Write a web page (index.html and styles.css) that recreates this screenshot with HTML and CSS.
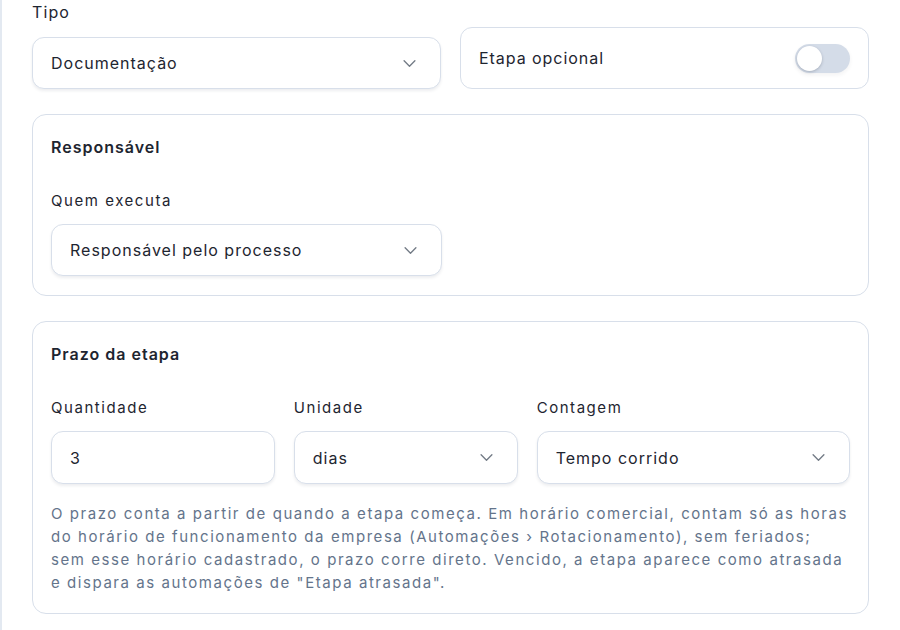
FILE: index.html
```html
<!DOCTYPE html>
<html lang="pt-BR">
<head>
<meta charset="utf-8">
<title>Etapa</title>
<link rel="stylesheet" href="styles.css">
</head>
<body>
<div class="page">
  <div class="top-row">
    <div class="field">
      <div class="label-plain">Tipo</div>
      <div class="select">
        <span>Documentação</span>
        <svg class="chev" viewBox="0 0 16 10" width="16" height="10"><path d="M2 2l6 6 6-6" fill="none" stroke="#737b86" stroke-width="1.5" stroke-linecap="round" stroke-linejoin="round"/></svg>
      </div>
    </div>
    <div class="toggle-card">
      <span>Etapa opcional</span>
      <div class="toggle"><div class="knob"></div></div>
    </div>
  </div>

  <section class="card card-resp">
    <h3 class="card-title">Responsável</h3>
    <div class="label">Quem executa</div>
    <div class="select half">
      <span>Responsável pelo processo</span>
      <svg class="chev" viewBox="0 0 16 10" width="16" height="10"><path d="M2 2l6 6 6-6" fill="none" stroke="#737b86" stroke-width="1.5" stroke-linecap="round" stroke-linejoin="round"/></svg>
    </div>
  </section>

  <section class="card card-prazo">
    <h3 class="card-title">Prazo da etapa</h3>
    <div class="grid3">
      <div class="col">
        <div class="label">Quantidade</div>
        <div class="select"><span>3</span></div>
      </div>
      <div class="col">
        <div class="label">Unidade</div>
        <div class="select">
          <span>dias</span>
          <svg class="chev" viewBox="0 0 16 10" width="16" height="10"><path d="M2 2l6 6 6-6" fill="none" stroke="#737b86" stroke-width="1.5" stroke-linecap="round" stroke-linejoin="round"/></svg>
        </div>
      </div>
      <div class="col">
        <div class="label">Contagem</div>
        <div class="select">
          <span>Tempo corrido</span>
          <svg class="chev" viewBox="0 0 16 10" width="16" height="10"><path d="M2 2l6 6 6-6" fill="none" stroke="#737b86" stroke-width="1.5" stroke-linecap="round" stroke-linejoin="round"/></svg>
        </div>
      </div>
    </div>
    <p class="help">O prazo conta a partir de quando a etapa começa. Em horário comercial, contam só as horas do horário de funcionamento da empresa (Automações › Rotacionamento), sem feriados; sem esse horário cadastrado, o prazo corre direto. Vencido, a etapa aparece como atrasada e dispara as automações de "Etapa atrasada".</p>
  </section>
</div>
</body>
</html>
```

FILE: styles.css
```css
* { box-sizing: border-box; }
html, body { margin: 0; padding: 0; background: #ffffff; }
body {
  font-family: Inter, "Noto Sans", sans-serif;
  color: #1e2530;
  height: 630px;
  overflow: hidden;
}
.page {
  border-left: 2px solid #e3e9f1;
  min-height: 630px;
  padding: 0 31px 0 30px;
  display: flex;
  flex-direction: column;
  gap: 25px;
}
.top-row {
  display: grid;
  grid-template-columns: 1fr 1fr;
  column-gap: 19px;
  align-items: end;
}
.label-plain {
  font-size: 16px;
  letter-spacing: 1.1px;
  line-height: 24px;
  margin-bottom: 13px;
  color: #1e2530;
}
.select {
  height: 52px;
  border: 1px solid #d8dfea;
  border-radius: 12px;
  background: #fff;
  box-shadow: 0 2px 3px rgba(30, 41, 59, 0.08);
  display: flex;
  align-items: center;
  justify-content: space-between;
  padding: 0 23px 0 18px;
  font-size: 16px;
  letter-spacing: 1px;
  color: #1e2530;
}
.select .chev { width: 15px; height: 9px; flex: none; }
.toggle-card {
  height: 62px;
  border: 1px solid #d8dfea;
  border-radius: 12px;
  display: flex;
  align-items: center;
  justify-content: space-between;
  padding: 0 18px 0 18px;
  font-size: 16px;
  letter-spacing: 0.95px;
  color: #1e2530;
}
.toggle {
  width: 55px;
  height: 29px;
  border-radius: 15px;
  background: #d4dce8;
  padding: 2px;
  display: flex;
  align-items: center;
  box-shadow: 0 2px 4px rgba(30, 41, 59, 0.06);
}
.knob {
  width: 25px;
  height: 25px;
  border-radius: 50%;
  background: #fff;
  box-shadow: 0 1px 3px rgba(30, 41, 59, 0.25);
}
.card {
  border: 1px solid #d8dfea;
  border-radius: 14px;
  padding: 18px;
}
.card-resp { padding-bottom: 19px; }
.card-prazo { padding-bottom: 19px; }
.card-title {
  margin: 0;
  font-size: 16px;
  font-weight: 600;
  letter-spacing: 1px;
  line-height: 28px;
  color: #1e2530;
}
.label {
  font-size: 15px;
  letter-spacing: 1.55px;
  line-height: 22px;
  color: #1e2530;
  margin-bottom: 12px;
}
.card-title + .label { margin-top: 29px; }
.card-title + .grid3 { margin-top: 29px; }
.half { width: 391px; }
.grid3 {
  display: grid;
  grid-template-columns: 1fr 1fr 1.4fr;
  column-gap: 19px;
}
.grid3 .select { height: 53px; }
.help {
  margin: 18px 0 0 0;
  font-size: 15px;
  line-height: 23px;
  letter-spacing: 1.56px;
  color: #64748b;
}
```
